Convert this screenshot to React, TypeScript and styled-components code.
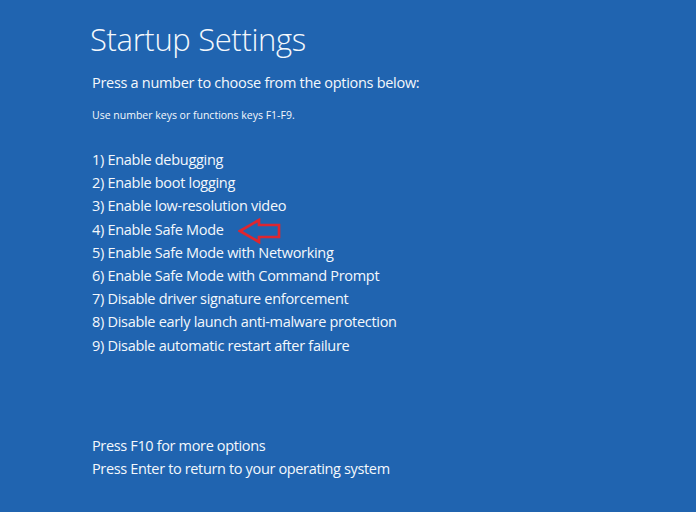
import React from 'react';
import styled, { createGlobalStyle } from 'styled-components';

const GlobalStyle = createGlobalStyle`
  html, body {
    margin: 0;
    padding: 0;
    background: #2064b0;
  }
`;

const Screen = styled.div`
  width: 696px;
  height: 512px;
  box-sizing: border-box;
  background: #2064b0;
  color: #f4f8fc;
  font-family: 'Open Sans', 'Noto Sans', sans-serif;
  padding: 18px 0 0 90px;
  display: flex;
  flex-direction: column;
`;

const Title = styled.h1`
  margin: 0;
  font-size: 31px;
  font-weight: 300;
  line-height: 42px;
  letter-spacing: -0.35px;
`;

const Prompt = styled.p`
  margin: 12px 0 0 2px;
  font-size: 14.5px;
  line-height: 22px;
  letter-spacing: -0.3px;
`;

const Hint = styled.p`
  margin: 14px 0 0 2px;
  font-size: 10.5px;
  line-height: 14px;
`;

const Options = styled.ol`
  list-style: none;
  margin: 26px 0 0 2px;
  padding: 0;
`;

const Option = styled.li`
  font-size: 14.5px;
  line-height: 23.2px;
  height: 23.2px;
  letter-spacing: -0.3px;
  display: flex;
  align-items: center;
  gap: 14px;
`;

const Footer = styled.div`
  margin: 77px 0 0 2px;
  font-size: 14.5px;
  line-height: 23px;
  letter-spacing: -0.35px;
`;

const ArrowIcon = styled.svg`
  margin: -1px 0 -5px;
  flex-shrink: 0;
`;

const Arrow = () => (
  <ArrowIcon width="44" height="26" viewBox="0 0 44 26">
    <path
      d="M2 13 L21 2 L21 7 L41 7 L41 19 L21 19 L21 24 Z"
      fill="none"
      stroke="#de2630"
      strokeWidth="2.7"
      strokeLinejoin="miter"
    />
  </ArrowIcon>
);

const options = [
  'Enable debugging',
  'Enable boot logging',
  'Enable low-resolution video',
  'Enable Safe Mode',
  'Enable Safe Mode with Networking',
  'Enable Safe Mode with Command Prompt',
  'Disable driver signature enforcement',
  'Disable early launch anti-malware protection',
  'Disable automatic restart after failure',
];

export default function App() {
  return (
    <>
      <GlobalStyle />
      <Screen>
        <Title>Startup Settings</Title>
        <Prompt>Press a number to choose from the options below:</Prompt>
        <Hint>Use number keys or functions keys F1-F9.</Hint>
        <Options>
          {options.map((label, i) => (
            <Option key={label}>
              <span>
                {i + 1}) {label}
              </span>
              {i === 3 && <Arrow />}
            </Option>
          ))}
        </Options>
        <Footer>
          <div>Press F10 for more options</div>
          <div>Press Enter to return to your operating system</div>
        </Footer>
      </Screen>
    </>
  );
}
